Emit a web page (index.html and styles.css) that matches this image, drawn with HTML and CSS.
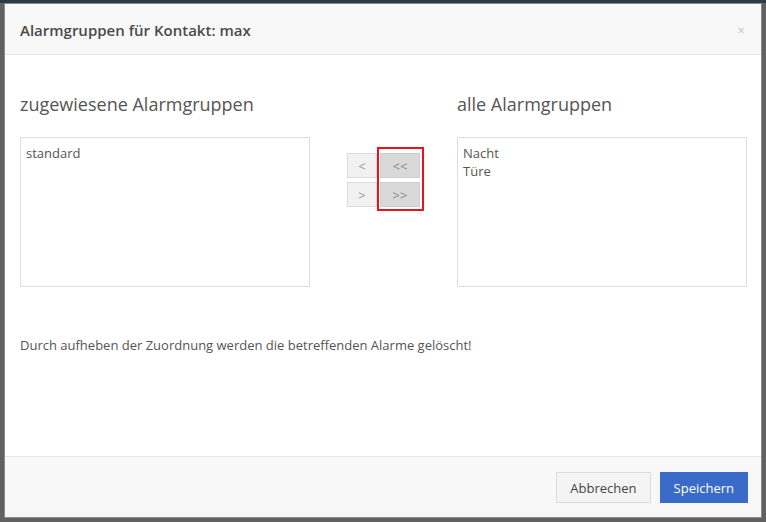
FILE: index.html
```html
<!DOCTYPE html>
<html lang="de">

<head>
    <meta charset="UTF-8">
    <title>Alarmgruppen</title>
    <link rel="stylesheet" href="styles.css">
</head>

<body>
    <div class="modal">
        <div class="modal-header">
            <h4 class="modal-title">Alarmgruppen für Kontakt: max</h4>
            <span class="close">×</span>
        </div>
        <div class="modal-body">
            <div class="columns">
                <div class="col">
                    <h3 class="col-title">zugewiesene Alarmgruppen</h3>
                    <div class="listbox">
                        <div>standard</div>
                    </div>
                </div>
                <div class="mover">
                    <div class="single">
                        <button class="btn-move">&lt;</button>
                        <button class="btn-move">&gt;</button>
                    </div>
                    <div class="highlight">
                        <button class="btn-move all">&lt;&lt;</button>
                        <button class="btn-move all">&gt;&gt;</button>
                    </div>
                </div>
                <div class="col">
                    <h3 class="col-title">alle Alarmgruppen</h3>
                    <div class="listbox">
                        <div>Nacht</div>
                        <div>Türe</div>
                    </div>
                </div>
            </div>
            <p class="note">Durch aufheben der Zuordnung werden die betreffenden Alarme gelöscht!</p>
        </div>
        <div class="modal-footer">
            <button class="btn btn-default">Abbrechen</button>
            <button class="btn btn-primary">Speichern</button>
        </div>
    </div>
</body>

</html>
```

FILE: styles.css
```css
html, body {
    margin: 0;
    padding: 0;
    height: 522px;
    overflow: hidden;
}

body {
    font-family: "Open Sans", Arial, sans-serif;
    background: linear-gradient(#2e3a47 0, #2e3a47 3px, #616161 3px);
    padding: 3px 4px 4px 4px;
    box-sizing: border-box;
}

.modal {
    height: 515px;
    background-color: #fff;
    border: 1px solid #8a8a8a;
    box-sizing: border-box;
    display: flex;
    flex-direction: column;
}

.modal-header {
    background-color: #f8f8f8;
    border-bottom: 1px solid #e5e5e5;
    padding: 15px 15px 13px 15px;
    display: flex;
    justify-content: space-between;
    align-items: center;
}

.modal-title {
    margin: 0;
    font-size: 15px;
    font-weight: 600;
    line-height: 22px;
    color: #4a4a4a;
}

.close {
    font-size: 13px;
    color: #c4c4c4;
    margin-right: 1px;
}

.modal-body {
    flex: 1;
    padding: 15px 14px 15px 15px;
}

.columns {
    display: grid;
    grid-template-columns: 290px 1fr 290px;
}

.col-title {
    margin: 22px 0 21px 0;
    font-size: 18px;
    font-weight: 400;
    line-height: 24px;
    color: #555;
}

.listbox {
    height: 150px;
    border: 1px solid #ddd;
    box-sizing: border-box;
    padding: 6px 5px;
    font-size: 13px;
    line-height: 18px;
    color: #555;
}

.mover {
    display: flex;
    justify-content: center;
    align-items: flex-start;
    margin-top: 77px;
    margin-left: 4px;
}

.single {
    display: flex;
    flex-direction: column;
    gap: 4px;
    margin-top: 6px;
}

.highlight {
    display: flex;
    flex-direction: column;
    gap: 4px;
    border: 2px solid #e8131a;
    padding: 4px 2px 2px 1px;
}

.btn-move {
    width: 30px;
    height: 25px;
    padding: 0;
    border: 1px solid #dcdcdc;
    background-color: #f1f1f1;
    color: #9a9a9a;
    font-family: "Open Sans", Arial, sans-serif;
    font-size: 13px;
}

.btn-move.all {
    width: 40px;
    background-color: #d9d9d9;
    border-color: #cfcfcf;
    color: #8a8a8a;
}

.note {
    margin: 49px 0 0 0;
    font-size: 13px;
    line-height: 18px;
    color: #555;
}

.modal-footer {
    background-color: #f8f8f8;
    border-top: 1px solid #e5e5e5;
    padding: 15px 13px 14px 15px;
    display: flex;
    justify-content: flex-end;
    gap: 9px;
}

.btn {
    height: 31px;
    padding: 0 13px;
    font-family: "Open Sans", Arial, sans-serif;
    font-size: 13px;
    border: 1px solid #dcdcdc;
    box-sizing: border-box;
}

.btn-default {
    background-color: #f4f4f4;
    color: #444;
}

.btn-primary {
    background-color: #3a6bc9;
    border-color: #3a6bc9;
    color: #fff;
}
```
